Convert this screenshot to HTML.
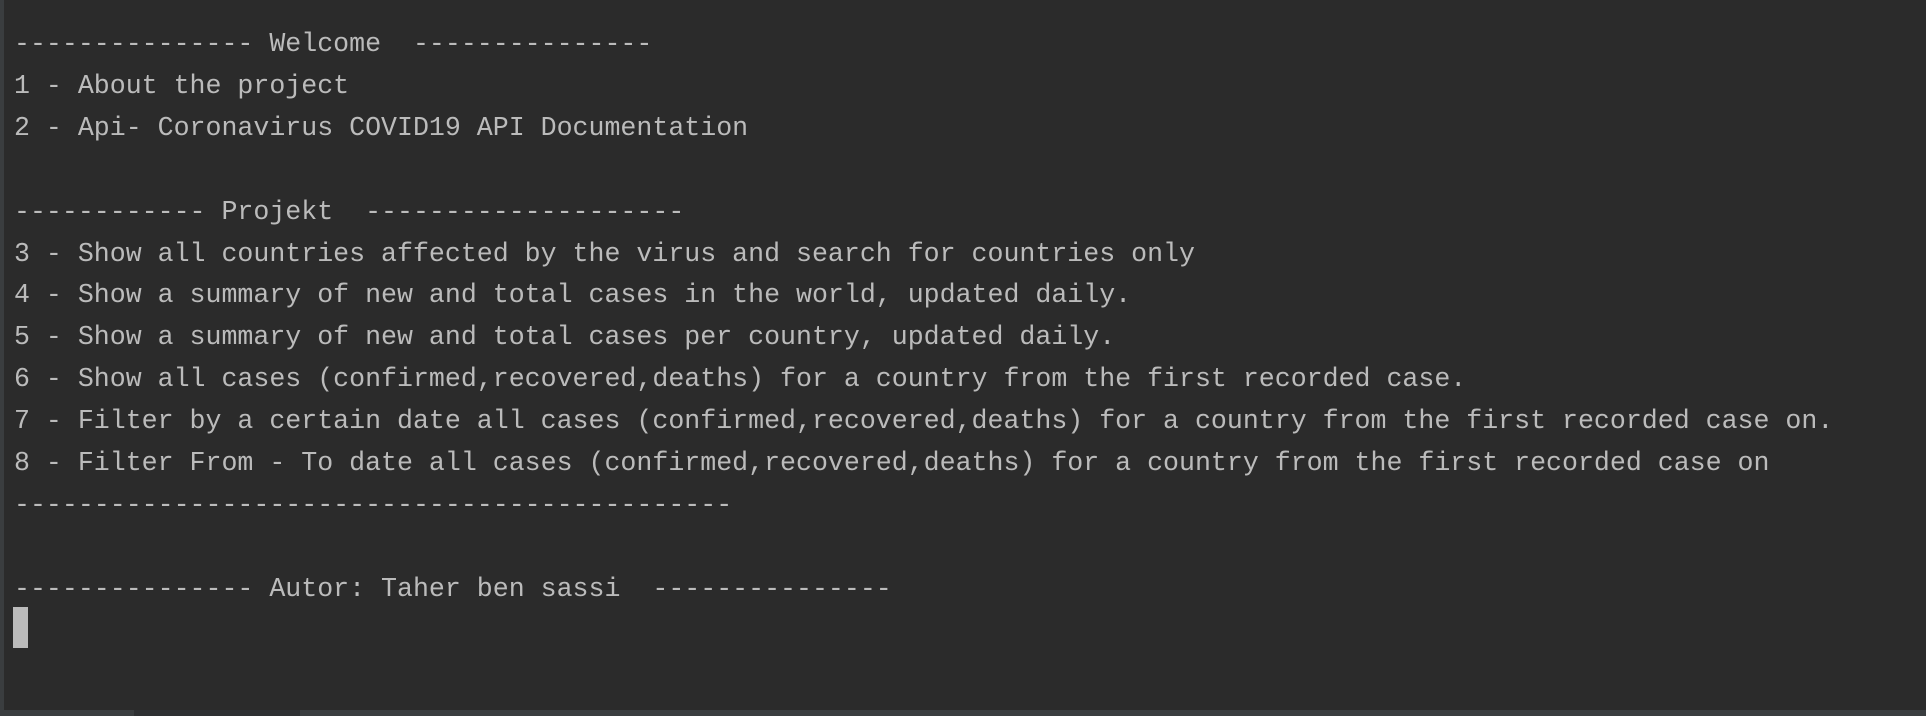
<!DOCTYPE html>
<html><head><meta charset="utf-8"><style>
html,body{margin:0;padding:0}
body{width:1926px;height:716px;background:#2b2b2b;position:relative;overflow:hidden}
.l{position:absolute;left:0;top:0;width:4px;height:710px;background:#3a3d3f}
.b{position:absolute;left:0;top:710px;width:1926px;height:6px;background:#3a3d3f}
.s{position:absolute;left:134px;top:710px;width:166px;height:6px;background:#2e3032}
pre{position:absolute;left:14px;top:24px;margin:0;font-family:"Liberation Mono",monospace;font-size:26.6px;line-height:41.9px;color:#bbbbbb;white-space:pre}
.c{position:absolute;left:13px;top:607px;width:15px;height:41px;background:#bbbbbb}
</style></head><body>
<div class="l"></div><div class="b"></div><div class="s"></div>
<pre>--------------- Welcome  ---------------
1 - About the project
2 - Api- Coronavirus COVID19 API Documentation

------------ Projekt  --------------------
3 - Show all countries affected by the virus and search for countries only
4 - Show a summary of new and total cases in the world, updated daily.
5 - Show a summary of new and total cases per country, updated daily.
6 - Show all cases (confirmed,recovered,deaths) for a country from the first recorded case.
7 - Filter by a certain date all cases (confirmed,recovered,deaths) for a country from the first recorded case on.
8 - Filter From - To date all cases (confirmed,recovered,deaths) for a country from the first recorded case on
---------------------------------------------

--------------- Autor: Taher ben sassi  ---------------</pre>
<div class="c"></div>
</body></html>
